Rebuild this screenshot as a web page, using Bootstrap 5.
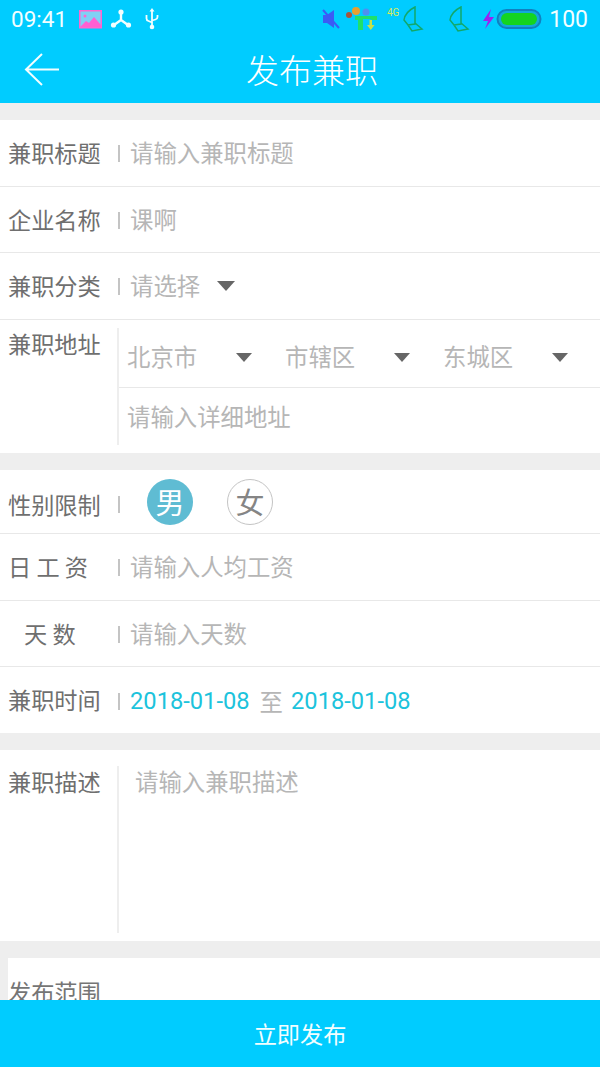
<!DOCTYPE html>
<html lang="zh">
<head>
<meta charset="utf-8">
<title>发布兼职</title>
<link href="https://cdn.jsdelivr.net/npm/bootstrap@5.3.0/dist/css/bootstrap.min.css" rel="stylesheet">
<style>
html,body{height:1067px;overflow:hidden}
body{font-family:"Noto Sans CJK SC","Roboto",sans-serif;background:#eeeeee;color:#757575;font-size:23.2px;line-height:1}
.shell{height:1067px}
.topbar{height:103px;background:#00ccff;color:#fff;flex:none}
.statusline{height:38px;padding:0 12px 0 11px}
.clock,.batt{font-family:Roboto,sans-serif;font-size:22.5px;color:#f2feff;line-height:1}
.batt{font-size:23px;margin-left:7px}
.titleline{height:65px;position:relative;padding-left:24px}
.backicon{position:absolute;left:24px;top:14px}
.titletext{font-size:33px;font-weight:300;width:100%;text-align:center;margin-top:-3px}
.ic-img{margin-left:12px}
.ic-node{margin-left:8px}
.ic-usb{margin-left:12px}
.ic-cluster{margin-left:5px}
.ic-4g{margin:-14px 0 0 8px}
.ic-leaf1{margin-left:2px}
.ic-leaf2{margin-left:22px}
.ic-bolt{margin-left:11px}
.ic-batt{margin-left:1px}
.body-scroll{flex:1 1 auto;min-height:0;overflow:hidden;padding-top:17px}
.block{background:#fff;margin-bottom:17px}
.line{display:flex;align-items:center;height:66.5px;border-bottom:1px solid #e8e8e8;padding-left:8px}
.line:last-child{border-bottom:0}
.lbl{width:93px;flex:none;white-space:nowrap;color:#6f6f6f}
.sep{width:2px;height:17px;background:#c4c4c4;margin:2px 10px 0 17px;flex:none}
.ph{color:#b6b6b6;font-size:23.4px}
.caret-dn{width:0;height:0;border-left:9px solid transparent;border-right:9px solid transparent;border-top:10px solid #666;display:inline-block}
.caret-gap{margin-left:17px}
.addr{align-items:stretch;height:133.5px;padding-top:8px;padding-bottom:8px;border-bottom:0}
.addr .lbl{padding-top:4px}
.addr-side{flex:1;border-left:2px solid #eeeeee;margin-left:16px;min-width:0}
.addr-top{height:60px;border-bottom:1px solid #e8e8e8;padding-left:8px}
.addr-cell{width:158px;flex:none;padding-right:33px;display:flex;justify-content:space-between;align-items:center}
.addr-cell .caret-dn{border-left-width:8px;border-right-width:8px;border-top-width:9px;margin-top:1px}
.addr-bot{height:58px;padding-left:8px}
.sexrow{height:64px}
.sexrow .lbl,.sexrow .sep{margin-top:6px}
.sexbtn{width:46px;height:46px;border-radius:50%;font-size:29px;display:flex;align-items:center;justify-content:center;flex:none}
.sex-on{background:#5fbcd3;color:#fff;margin-left:17px}
.sex-off{border:1px solid #c4c4c4;color:#858585;margin-left:34px}
.timerow{height:66px}
.datev{color:#1cc3dc;font-family:Roboto,sans-serif;font-size:23.7px;margin-top:4px}
.dateto{margin:3px 8px 0 10px}
.desc{align-items:stretch;height:191px;padding-top:16px;padding-bottom:8px;border-bottom:0}
.desc .lbl{padding-top:4px}
.desc-side{flex:1;border-left:2px solid #eeeeee;margin-left:16px;padding:4px 0 0 16px}
.scope{margin-left:8px;margin-bottom:0;height:60px;padding:22px 0 0 0}
.footbar{height:67px;flex:none;background:#00ccff;color:#f2feff;font-size:23.2px}
</style>
</head>
<body>
<div class="shell d-flex flex-column">
  <header class="topbar">
    <div class="statusline d-flex align-items-center justify-content-between">
      <div class="d-flex align-items-center">
        <span class="clock">09:41</span>
        <svg class="ic-img" width="23" height="19" viewBox="0 0 23 19"><rect x=".75" y=".75" width="21.500" height="17" fill="#7fd0f5" stroke="#ff66d0" stroke-width="1.500"/><path d="M1 17l6-6 3 2 5-6 7 8v2H1z" fill="#ff5fd2"/><circle cx="6" cy="6" r="1.500" fill="#ff66d0"/></svg>
        <svg class="ic-node" width="22" height="20" viewBox="0 0 22 20"><g fill="none" stroke="#f2feff" stroke-width="2.400"><path d="M11 3v8M11 11l-7 5M11 11l7 5"/></g><circle cx="11" cy="3" r="2.600" fill="#f2feff"/><circle cx="3.500" cy="16" r="2.600" fill="#f2feff"/><circle cx="18.500" cy="16" r="2.600" fill="#f2feff"/></svg>
        <svg class="ic-usb" width="16" height="22" viewBox="0 0 16 22"><g fill="none" stroke="#f2feff" stroke-width="1.800"><path d="M8 3v16M2.500 7v3.500q0 2 2 2.500L8 14.500M13.500 7v2q0 2-2 2.500L8 12.500"/></g><path d="M8 0l2.500 3.500h-5z" fill="#f2feff"/><circle cx="8" cy="19" r="2.300" fill="#f2feff"/></svg>
      </div>
      <div class="d-flex align-items-center">
        <svg width="18" height="20" viewBox="0 0 18 20"><path d="M1 6h4l7-5v18l-7-5H1z" fill="#3b5cf5"/><path d="M1 1l16 18" stroke="#3b5cf5" stroke-width="2"/></svg>
        <svg class="ic-cluster" width="34" height="24" viewBox="0 0 34 24"><circle cx="4" cy="8" r="3" fill="#a8553a"/><circle cx="11" cy="4" r="4" fill="#e6a030"/><circle cx="21" cy="5" r="3.500" fill="#4f8ff0"/><path d="M10 9h22v4h-5l-2-1h-7v11h-5V13h-3z" fill="#1fe06a"/><path d="M24.500 13h2.500v5h2.500l-3.700 5-3.800-5h2.500z" fill="#c6e04a"/></svg>
        <svg class="ic-4g" width="12" height="10" viewBox="0 0 12 10"><text x="0" y="9" font-size="10" fill="#d7e85a" font-family="Roboto">4G</text></svg>
        <svg class="ic-leaf1" width="24" height="27" viewBox="0 0 24 27"><g fill="none" stroke="#12a86a" stroke-width="1.500"><path d="M14 1Q4 6 3 14l4 5 7-1zM7 19l4 6 10-2-7-6"/></g></svg>
        <svg class="ic-leaf2" width="24" height="27" viewBox="0 0 24 27"><g fill="none" stroke="#12a86a" stroke-width="1.500"><path d="M14 1Q4 6 3 14l4 5 7-1zM7 19l4 6 10-2-7-6"/></g></svg>
        <svg class="ic-bolt" width="13" height="20" viewBox="0 0 13 20"><path d="M9 0L1 12h5l-3 8 9-12H7z" fill="#9a22f0"/></svg>
        <svg class="ic-batt" width="46" height="22" viewBox="0 0 46 22"><rect x="1.500" y="2" width="43" height="18" rx="9" fill="#14a8d8" stroke="#1080c0" stroke-width="2"/><rect x="5" y="5" width="36" height="12" rx="6" fill="#14d420"/></svg>
        <span class="batt">100</span>
      </div>
    </div>
    <div class="titleline d-flex align-items-center">
      <svg class="backicon" width="36" height="36" viewBox="0 0 36 36"><path d="M18 2L2 17.500 18 33M2 17.500h33" fill="none" stroke="#f2feff" stroke-width="2"/></svg>
      <div class="titletext">发布兼职</div>
    </div>
  </header>

  <main class="body-scroll">
    <section class="block">
      <div class="line"><span class="lbl">兼职标题</span><i class="sep"></i><span class="ph">请输入兼职标题</span></div>
      <div class="line"><span class="lbl">企业名称</span><i class="sep"></i><span class="ph">课啊</span></div>
      <div class="line"><span class="lbl">兼职分类</span><i class="sep"></i><span class="ph">请选择</span><i class="caret-dn caret-gap"></i></div>
      <div class="line addr">
        <span class="lbl">兼职地址</span>
        <div class="addr-side">
          <div class="addr-top d-flex align-items-center">
            <div class="addr-cell"><span class="ph">北京市</span><i class="caret-dn"></i></div>
            <div class="addr-cell"><span class="ph">市辖区</span><i class="caret-dn"></i></div>
            <div class="addr-cell"><span class="ph">东城区</span><i class="caret-dn"></i></div>
          </div>
          <div class="addr-bot d-flex align-items-center"><span class="ph">请输入详细地址</span></div>
        </div>
      </div>
    </section>

    <section class="block">
      <div class="line sexrow"><span class="lbl">性别限制</span><i class="sep"></i>
        <div class="sexbtn sex-on">男</div><div class="sexbtn sex-off">女</div>
      </div>
      <div class="line"><span class="lbl">日 工 资</span><i class="sep"></i><span class="ph">请输入人均工资</span></div>
      <div class="line"><span class="lbl ps-3">天 数</span><i class="sep"></i><span class="ph">请输入天数</span></div>
      <div class="line timerow"><span class="lbl">兼职时间</span><i class="sep"></i><span class="datev">2018-01-08</span><span class="ph dateto">至</span><span class="datev">2018-01-08</span></div>
    </section>

    <section class="block">
      <div class="line desc">
        <span class="lbl">兼职描述</span>
        <div class="desc-side"><span class="ph">请输入兼职描述</span></div>
      </div>
    </section>

    <section class="block scope">发布范围</section>
  </main>

  <footer class="footbar d-flex align-items-center justify-content-center">立即发布</footer>
</div>
</body>
</html>
